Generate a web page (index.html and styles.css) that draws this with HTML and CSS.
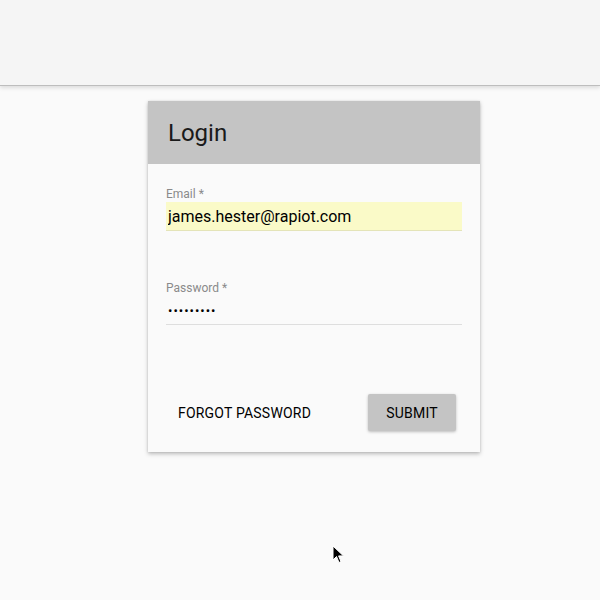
FILE: index.html
```html
<!DOCTYPE html>
<html lang="en">
<head>
    <meta charset="UTF-8">
    <meta name="viewport" content="width=device-width, initial-scale=1.0">
    <title>Login</title>
    <link rel="stylesheet" href="styles.css">
</head>
<body>
    <div class="topbar"></div>
    <div class="pagina">
        <div class="cartao">
            <div class="cartao-topo">
                <h1>Login</h1>
            </div>
            <form class="cartao-corpo" action="#" method="post">
                <div class="campo">
                    <label for="email">Email *</label>
                    <input type="text" id="email" class="preenchido" value="james.hester@rapiot.com">
                </div>
                <div class="campo">
                    <label for="senha">Password *</label>
                    <input type="password" id="senha" value="123456789">
                </div>
                <div class="acoes">
                    <button type="button" class="botao-texto">Forgot password</button>
                    <button type="submit" class="botao-enviar">Submit</button>
                </div>
            </form>
        </div>
    </div>
    <!-- cursor do mouse -->
    <svg class="cursor" width="14" height="20" viewBox="0 0 14 20">
        <path d="M1 1 L1 15 L4.5 11.5 L7 17.5 L9 16.6 L6.6 10.9 L11.5 10.9 Z" fill="#000" stroke="#fff" stroke-width="1"/>
    </svg>
</body>
</html>
```

FILE: styles.css
```css
body {
    margin: 0;
    padding: 0;
    background: #fafafa;
    font-family: Roboto, "Liberation Sans", Arial, sans-serif;
    height: 600px;
    overflow: hidden;
}
.topbar {
    height: 85px;
    background: #f5f5f5;
    border-bottom: 1px solid #bdbdbd;
    box-shadow: 0 2px 4px rgba(0, 0, 0, 0.12);
}
.pagina {
    padding: 15px 0 0 148px;
}
.cartao {
    width: 332px;
    background: #fafafa;
    box-shadow: 0 2px 4px rgba(0, 0, 0, 0.25), 0 0 2px rgba(0, 0, 0, 0.1);
}
.cartao-topo {
    height: 63px;
    background: #c4c4c4;
    display: flex;
    align-items: center;
    padding: 0 20px;
}
h1 {
    margin: 0;
    font-size: 24px;
    font-weight: 400;
    color: #1a1a1a;
}
.cartao-corpo {
    padding: 23px 18px 21px 18px;
    display: flex;
    flex-direction: column;
}
.campo {
    display: flex;
    flex-direction: column;
    margin-bottom: 50px;
}
.campo label {
    font-size: 12px;
    line-height: 14px;
    color: #8a8a8a;
    margin-bottom: 1px;
}
.campo input {
    height: 28px;
    padding: 0 2px;
    border: none;
    border-bottom: 1px solid #dedede;
    background: transparent;
    font-family: inherit;
    font-size: 16px;
    color: #000;
    outline: none;
}
.campo input.preenchido {
    background: #fafac8;
    border-bottom-color: #e4e4b8;
}
.campo input[type="password"] {
    font-size: 13px;
    letter-spacing: 1px;
}
.acoes {
    display: flex;
    justify-content: space-between;
    align-items: center;
    margin-top: 19px;
}
.botao-texto, .botao-enviar {
    font-family: inherit;
    font-size: 14px;
    font-weight: 400;
    text-transform: uppercase;
    letter-spacing: 0.2px;
    color: #000;
    border: none;
    cursor: pointer;
    height: 37px;
}
.botao-texto {
    background: transparent;
    padding: 0 12px;
}
.botao-enviar {
    width: 88px;
    margin-right: 6px;
    background: #c4c4c4;
    border-radius: 2px;
    box-shadow: 0 1px 3px rgba(0, 0, 0, 0.25);
}
.cursor {
    position: absolute;
    left: 332px;
    top: 545px;
}
```
